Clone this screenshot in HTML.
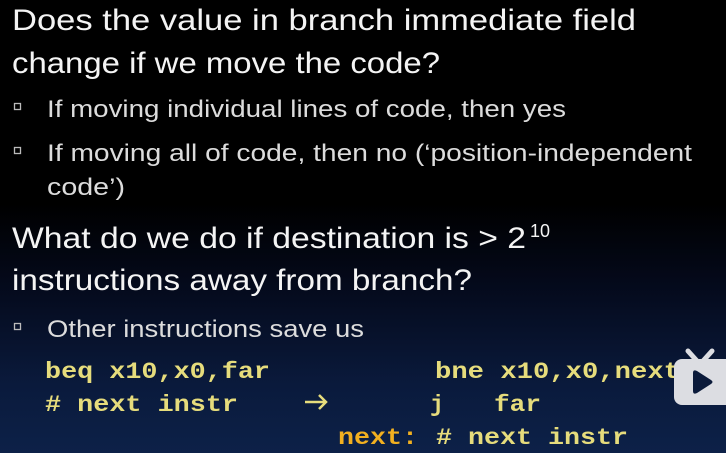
<!DOCTYPE html>
<html><head><meta charset="utf-8"><style>
html,body{margin:0;padding:0;}
body{width:726px;height:453px;overflow:hidden;background:linear-gradient(to bottom,#000 0%,#000 45%,#04091a 62%,#0a1a3c 85%,#0d2148 100%);}
svg{position:absolute;left:0;top:0;}
</style></head><body>
<svg width="726" height="453" viewBox="0 0 726 453">
<g font-family="Liberation Sans, sans-serif" fill="#f4f4f4" font-size="30">
<text x="12" y="30" textLength="624" lengthAdjust="spacingAndGlyphs">Does the value in branch immediate field</text>
<text x="12" y="73" textLength="428" lengthAdjust="spacingAndGlyphs">change if we move the code?</text>
<text x="12" y="248" textLength="514" lengthAdjust="spacingAndGlyphs">What do we do if destination is &gt; 2</text>
<text x="530" y="237" font-size="18" textLength="20" lengthAdjust="spacingAndGlyphs">10</text>
<text x="12" y="290" textLength="460" lengthAdjust="spacingAndGlyphs">instructions away from branch?</text>
</g>
<g font-family="Liberation Sans, sans-serif" fill="#dcdcdc" font-size="24">
<text x="47" y="117" textLength="519" lengthAdjust="spacingAndGlyphs">If moving individual lines of code, then yes</text>
<text x="47" y="161" textLength="645" lengthAdjust="spacingAndGlyphs">If moving all of code, then no (‘position-independent</text>
<text x="47" y="195" textLength="78" lengthAdjust="spacingAndGlyphs">code’)</text>
<text x="47" y="337" textLength="317" lengthAdjust="spacingAndGlyphs">Other instructions save us</text>
</g>
<g fill="none" stroke="#bbb" stroke-width="1.3">
<rect x="14.5" y="103.5" width="6" height="6"/>
<rect x="14.5" y="147.5" width="6" height="6"/>
<rect x="14.5" y="323.5" width="6" height="6"/>
</g>
<g font-family="Liberation Mono, monospace" font-weight="bold" fill="#e6dc7c" font-size="23">
<text x="45" y="378" textLength="225" lengthAdjust="spacingAndGlyphs">beq x10,x0,far</text>
<text x="45" y="411" textLength="193" lengthAdjust="spacingAndGlyphs"># next instr</text>
<text x="435" y="378" textLength="245" lengthAdjust="spacingAndGlyphs">bne x10,x0,next</text>
<text x="430" y="411">j</text>
<text x="494" y="411" textLength="47" lengthAdjust="spacingAndGlyphs">far</text>
<text x="338" y="444" fill="#f2b020" textLength="80" lengthAdjust="spacingAndGlyphs">next:</text>
<text x="436" y="444" textLength="192" lengthAdjust="spacingAndGlyphs"># next instr</text>
</g>
<path d="M305 402 H326 M319 395 L326 402 L319 409" stroke="#e6dc7c" stroke-width="2.5" fill="none"/>
<g fill="#dcdde2">
<rect x="674" y="359" width="60" height="46" rx="8"/>
<path d="M688 351 L697 361 M712 351 L703 361" stroke="#dcdde2" stroke-width="5" stroke-linecap="round"/>
</g>
<path d="M693 373 Q693 369 697 371 L711 380 Q714 382 711 384 L697 393 Q693 395 693 391 Z" fill="#0b1a3a"/>
</svg>
</body></html>
